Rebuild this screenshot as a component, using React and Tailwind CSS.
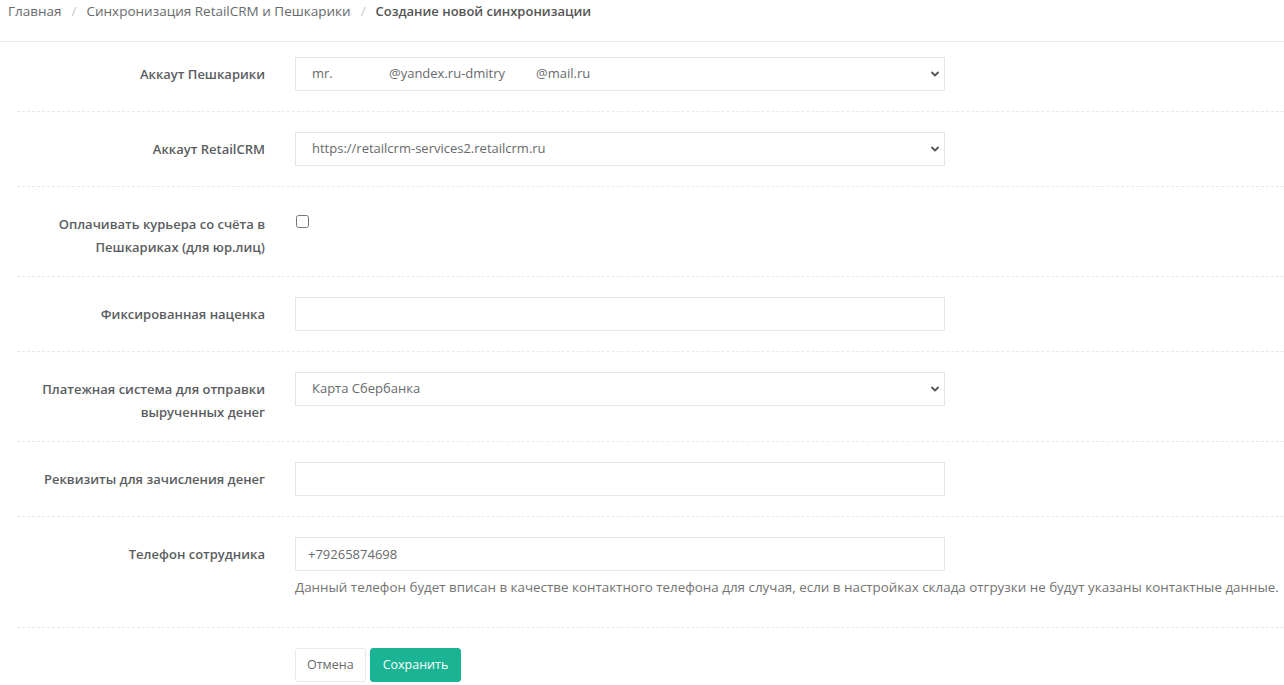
import React from 'react';

const font = { fontFamily: '"Open Sans", "Liberation Sans", sans-serif' };

function Chevron() {
  return (
    <svg width="10" height="10" viewBox="0 0 10 10" className="absolute right-[4px] top-1/2 -translate-y-1/2 text-[#555]">
      <path d="M2 3.5 L5 6.5 L8 3.5" fill="none" stroke="currentColor" strokeWidth="1.8" strokeLinecap="round" strokeLinejoin="round" />
    </svg>
  );
}

function SelectBox({ children }) {
  return (
    <div className="relative h-[34px] w-[650px] border border-[#e5e6e7] bg-white pl-[16px] pr-8 flex items-center text-[13px] text-[#676a6c] whitespace-nowrap">
      {children}
      <Chevron />
    </div>
  );
}

function TextBox({ value = '' }) {
  return (
    <input
      type="text"
      defaultValue={value}
      className="h-[34px] w-[650px] border border-[#e5e6e7] bg-white px-[12px] text-[13px] text-[#676a6c] outline-none"
      style={font}
    />
  );
}

function Row({ label, multiline = false, children }) {
  return (
    <div className="flex">
      <label
        className={`w-[248px] shrink-0 text-right font-semibold text-[13px] leading-[23px] pt-[6px] text-[#5a5d5f] ${multiline ? '-mb-[3px]' : ''}`}
      >
        {label}
      </label>
      <div className="ml-[30px] flex-1">{children}</div>
    </div>
  );
}

function Divider() {
  return <div className="border-t border-dashed border-[#e7eaec] my-[20px]" />;
}

export default function App() {
  return (
    <div className="w-[1284px] min-h-[685px] bg-white text-[#676a6c]" style={font}>
      <div className="h-[42px] border-b border-[#e7eaec] px-[8px] pt-[2px] text-[13.5px] leading-[18px] flex gap-[10px]">
        <span>Главная</span>
        <span className="text-[#ccc]">/</span>
        <span>Синхронизация RetailCRM и Пешкарики</span>
        <span className="text-[#ccc]">/</span>
        <span className="font-semibold text-[13px] text-[#555]">Создание новой синхронизации</span>
      </div>

      <form className="pl-[17px] pt-[15px]">
        <Row label="Аккаут Пешкарики">
          <SelectBox>
            <span className="w-[77px]">mr.</span>
            <span className="w-[147px]">@yandex.ru-dmitry</span>
            <span>@mail.ru</span>
          </SelectBox>
        </Row>
        <Divider />

        <Row label="Аккаут RetailCRM">
          <SelectBox>https://retailcrm-services2.retailcrm.ru</SelectBox>
        </Row>
        <Divider />

        <Row multiline label={<>Оплачивать курьера со счёта в<br />Пешкариках (для юр.лиц)</>}>
          <input type="checkbox" className="mt-[8px] ml-[1px] w-[13px] h-[13px]" />
        </Row>
        <Divider />

        <Row label="Фиксированная наценка">
          <TextBox />
        </Row>
        <Divider />

        <Row multiline label={<>Платежная система для отправки<br />вырученных денег</>}>
          <SelectBox>Карта Сбербанка</SelectBox>
        </Row>
        <Divider />

        <Row label="Реквизиты для зачисления денег">
          <TextBox />
        </Row>
        <Divider />

        <Row label="Телефон сотрудника">
          <TextBox value="+79265874698" />
          <p className="mt-[7px] mb-[11px] text-[13.4px] leading-[18px] text-[#737373] whitespace-nowrap">
            Данный телефон будет вписан в качестве контактного телефона для случая, если в настройках склада отгрузки не будут указаны контактные данные.
          </p>
        </Row>
        <Divider />

        <div className="flex">
          <div className="w-[248px] shrink-0" />
          <div className="ml-[30px] flex gap-[4px]">
            <button type="button" className="h-[34px] px-[11px] border border-[#e7eaec] rounded-[3px] bg-white text-[12.5px] text-[#676a6c]">
              Отмена
            </button>
            <button type="button" className="h-[34px] px-[12px] border border-[#1ab394] rounded-[3px] bg-[#1ab394] text-[12.5px] text-white">
              Сохранить
            </button>
          </div>
        </div>
      </form>
    </div>
  );
}
